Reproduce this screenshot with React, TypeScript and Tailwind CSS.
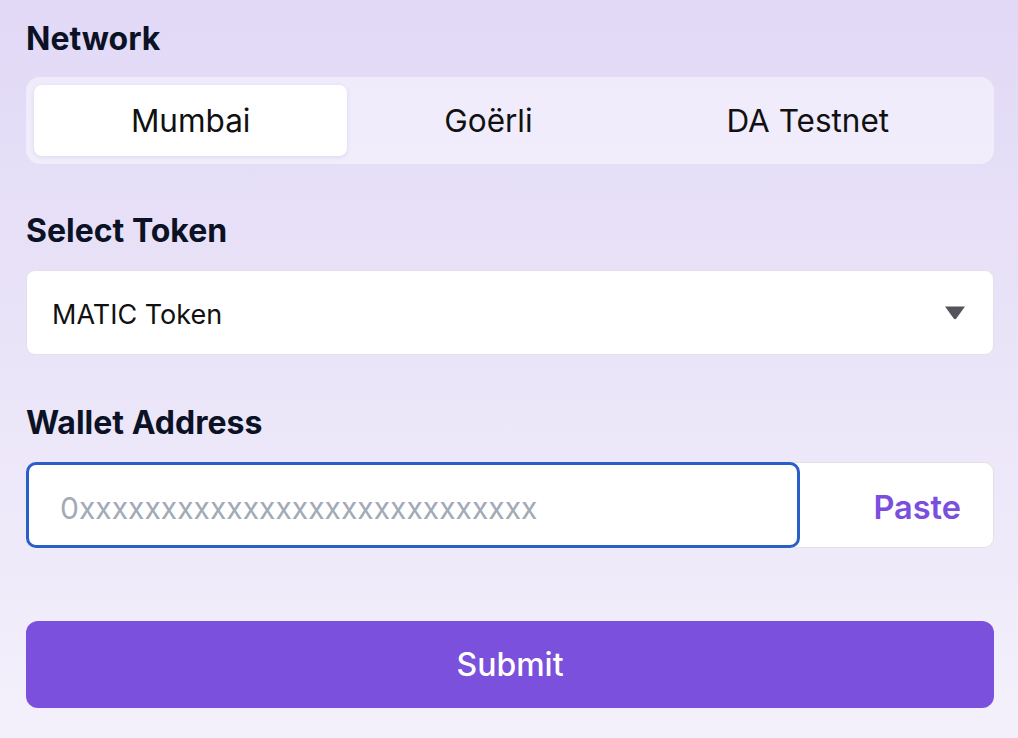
import React, { useState } from 'react';

const NETWORKS = ['Mumbai', 'Goërli', 'DA Testnet'];

export default function App() {
  const [network, setNetwork] = useState('Mumbai');
  const [address, setAddress] = useState('');

  return (
    <div
      className="min-h-[738px] w-full bg-gradient-to-b from-[#e1d9f6] to-[#f4f0fb] pl-[26px] pr-[24px] pt-[21px] text-[#0b1226]"
      style={{ fontFamily: 'Inter, "Noto Sans", sans-serif' }}
    >
      {/* Network */}
      <label className="block h-[36px] text-[32px] font-bold leading-[36px]">Network</label>
      <div className="mt-[20px] flex h-[87px] rounded-[14px] bg-white/45 p-[8px]">
        {NETWORKS.map((n) => (
          <button
            key={n}
            onClick={() => setNetwork(n)}
            className={`flex-auto rounded-[8px] text-[31.5px] text-[#111] ${
              network === n ? 'bg-white shadow-[0_1px_4px_rgba(80,60,140,0.12)]' : ''
            }`}
          >
            {n}
          </button>
        ))}
      </div>

      {/* Select Token */}
      <label className="mt-[49px] block h-[36px] text-[32px] font-bold leading-[36px]">Select Token</label>
      <div className="relative mt-[21px] flex h-[85px] items-center rounded-[9px] border border-[#e3e1e8] bg-white pl-[25px] pr-[27px]">
        <span className="flex-1 pt-[5px] text-[27px] text-[#111]">MATIC Token</span>
        <svg width="22" height="15" viewBox="0 0 22 15">
          <path d="M1 1.5 H21 L12.3 13.5 Q11 15 9.7 13.5 Z" fill="#54545c" />
        </svg>
      </div>

      {/* Wallet Address */}
      <label className="mt-[50px] block h-[36px] text-[32px] font-bold leading-[36px]">Wallet Address</label>
      <div className="mt-[21px] flex h-[86px] rounded-[10px] border border-[#e3e1e8] bg-white">
        <input
          autoFocus
          value={address}
          onChange={(e) => setAddress(e.target.value)}
          placeholder="0xxxxxxxxxxxxxxxxxxxxxxxxxxxx"
          className="-m-px h-[86px] w-[774px] rounded-[10px] border-[3px] border-[#2a5fc8] bg-white pl-[31px] pt-[5px] text-[30px] text-[#111] caret-black outline-none placeholder:text-[#a3aab7]"
        />
        <button className="flex-1 pr-[32px] pt-[6px] text-right text-[32.5px] font-semibold text-[#7b4edd]">Paste</button>
      </div>

      {/* Submit */}
      <button className="mt-[73px] flex h-[87px] w-full items-center justify-center rounded-[12px] bg-[#7b50dc] text-[32px] font-medium text-white">
        Submit
      </button>
    </div>
  );
}
